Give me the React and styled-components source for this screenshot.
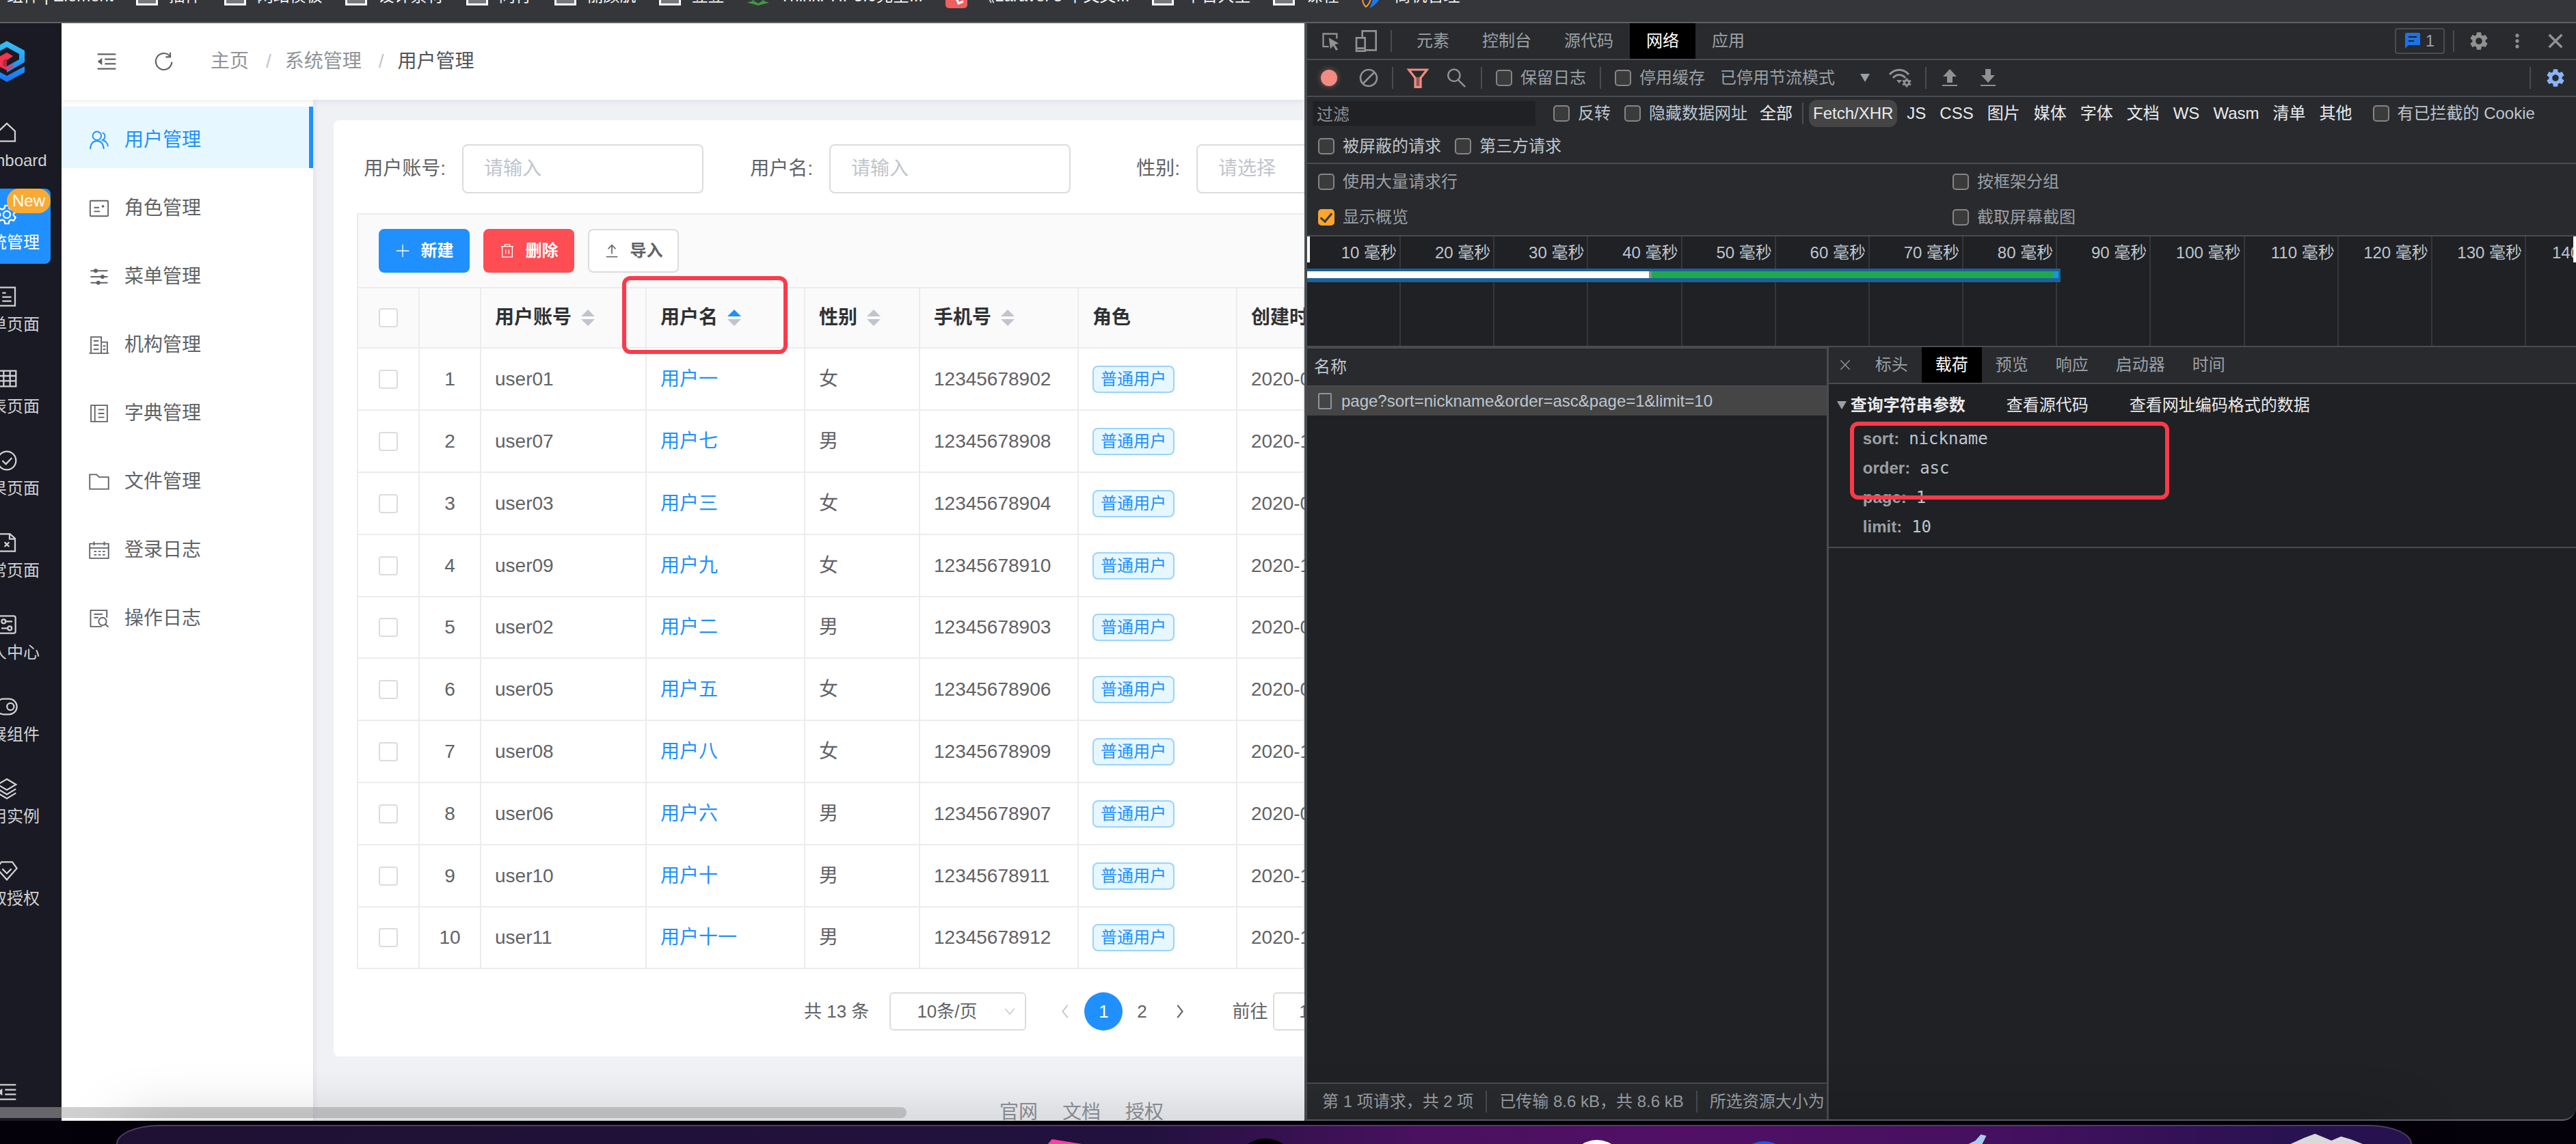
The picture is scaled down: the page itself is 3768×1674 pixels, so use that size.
import React from 'react';
import styled, { createGlobalStyle } from 'styled-components';
import { MdSettings, MdBlock, MdMoreVert } from 'react-icons/md';

const GlobalStyle = createGlobalStyle`
  * {
    box-sizing: border-box;
  }
  body {
    margin: 0;
    background: #04010a;
    font-family: "Liberation Sans", "Noto Sans CJK SC", sans-serif;
  }
  button, input, select {
    font: inherit;
    color: inherit;
    margin: 0;
  }
  button {
    border: 0;
    background: none;
    padding: 0;
    cursor: pointer;
  }
  a {
    color: inherit;
    text-decoration: none;
  }
`;

/* ---------- window ---------- */

const Screen = styled.div`
  position: relative;
  display: flex;
  flex-direction: column;
  height: 100vh;
  overflow: hidden;
`;
const Bookmarks = styled.nav`
  display: flex;
  flex: 0 0 34px;
  align-items: flex-end;
  gap: 33px;
  padding: 0 10px 24px;
  overflow: hidden;
  background: #35363a;
  border-bottom: 2px solid #5f6063;
  color: #f1f3f4;
  font-size: 24px;
  line-height: 28px;
  white-space: nowrap;
`;
const Bookmark = styled.a`
  display: flex;
  flex: none;
  align-items: flex-end;
  gap: 16px;
`;
const Windows = styled.div`
  display: flex;
  flex: 1;
  min-height: 0;
  margin-bottom: 34px;
`;
const AppPane = styled.div`
  position: relative;
  display: flex;
  flex: 955 1 0;
  min-width: 0;
  overflow: hidden;
  background: #eff1f5;
  color: #606266;
  font-size: 28px;
  line-height: 40px;
`;
const ScrollThumb = styled.div`
  position: absolute;
  left: 0;
  bottom: 4px;
  width: 1326px;
  height: 16px;
  border-radius: 0 8px 8px 0;
  background: rgba(168, 168, 168, 0.54);
`;

/* ---------- dark rail ---------- */

const Rail = styled.aside`
  display: flex;
  flex: 0 0 90px;
  justify-content: flex-end;
  overflow: hidden;
  background: #191a23;
  color: #d1d1d3;
`;
const RailInner = styled.div`
  display: flex;
  flex: 0 0 160px;
  flex-direction: column;
  align-items: center;
  padding-bottom: 26px;
`;
const LogoBox = styled.a`
  display: flex;
  align-items: center;
  height: 112px;
`;
const RailList = styled.nav`
  display: flex;
  flex: 1;
  flex-direction: column;
  gap: 10px;
  padding-top: 10px;
`;
const RailItem = styled.a`
  position: relative;
  display: flex;
  flex-direction: column;
  align-items: center;
  gap: 8px;
  width: 128px;
  height: 110px;
  padding-top: 22px;
  border-radius: 8px;
  background: ${({ $active }) => ($active ? '#2090ff' : 'none')};
  color: ${({ $active }) => ($active ? '#fff' : 'inherit')};
  font-size: 24px;
  line-height: 34px;
`;
const NewBadge = styled.span`
  position: absolute;
  top: 0;
  right: 0;
  padding: 0 8px;
  border-radius: 18px;
  background: #f8aa35;
  color: #fff;
  line-height: 36px;
`;

/* ---------- main column ---------- */

const Main = styled.div`
  display: flex;
  flex: 1;
  flex-direction: column;
  min-width: 0;
`;
const Header = styled.header`
  position: relative;
  z-index: 1;
  display: flex;
  flex: 0 0 112px;
  align-items: center;
  padding-left: 50px;
  background: #fff;
  box-shadow: 0 2px 8px rgba(0, 21, 41, 0.08);
`;
const HeaderButton = styled.button`
  display: flex;
  width: 84px;
`;
const Crumbs = styled.nav`
  display: flex;
  color: #909399;
`;
const Crumb = styled.a`
  color: ${({ $current }) => ($current ? '#515459' : '#909399')};
  &:not(:first-child)::before {
    content: "/";
    margin: 0 20px 0 25px;
    color: #c0c4cc;
  }
`;
const Body = styled.div`
  display: flex;
  flex: 1;
  min-height: 0;
`;
const SideMenu = styled.nav`
  display: flex;
  flex: 0 0 368px;
  flex-direction: column;
  gap: 10px;
  padding-top: 10px;
  background: #fff;
  box-shadow: 2px 0 8px rgba(0, 21, 41, 0.07);
`;
const SideItem = styled.a`
  display: flex;
  align-items: center;
  gap: 22px;
  height: 90px;
  padding: 8px 0 0 40px;
  border-right: 6px solid ${({ $active }) => ($active ? '#2090ff' : 'transparent')};
  background: ${({ $active }) => ($active ? '#e6f7ff' : 'none')};
  color: ${({ $active }) => ($active ? '#2090ff' : '#606266')};
`;
const Content = styled.main`
  flex: 1;
  min-width: 0;
  overflow: hidden;
  padding: 30px 0 0 30px;
`;
const Card = styled.section`
  padding: 35px 0 38px 34px;
  border-radius: 8px 0 0 8px;
  background: #fff;
`;
const SearchForm = styled.form`
  display: grid;
  grid-template-columns: repeat(3, 507px);
  gap: 30px;
  padding-bottom: 29px;
`;
const Field = styled.div`
  display: flex;
  align-items: center;
`;
const FieldLabel = styled.label`
  flex: 0 0 154px;
  padding-right: 24px;
  text-align: right;
  white-space: nowrap;
`;
const TextInput = styled.input`
  flex: 1;
  min-width: 0;
  height: 72px;
  padding: 0 30px;
  border: 2px solid #dcdcdc;
  border-radius: 8px;
  background: #fff;
  &::placeholder {
    color: #c0c4cc;
  }
`;
const SelectInput = styled.select`
  flex: 1;
  height: 72px;
  padding: 0 30px;
  appearance: none;
  border: 2px solid #dcdcdc;
  border-radius: 8px;
  background: #fff;
  color: #c0c4cc;
`;
const TableBox = styled.div`
  border: 2px solid #ececec;
  border-width: 2px 0 0 2px;
`;
const TableTools = styled.div`
  display: flex;
  gap: 20px;
  padding: 21px 30px;
  background: #fafafa;
  border-bottom: 2px solid #ececec;
`;
const ToolButton = styled.button`
  display: flex;
  align-items: center;
  justify-content: center;
  gap: 16px;
  width: 133px;
  height: 64px;
  border: 2px solid ${({ $color }) => $color || '#dcdcdc'};
  border-radius: 8px;
  background: ${({ $color }) => $color || '#fff'};
  color: ${({ $color }) => ($color ? '#fff' : '#606266')};
  font-size: 24px;
  font-weight: 700;
`;
const Table = styled.table`
  width: 100%;
  table-layout: fixed;
  border-spacing: 0;
`;
const Col = styled.col`
  width: ${({ $w }) => $w};
`;
const Th = styled.th`
  position: relative;
  height: 88px;
  padding: 0 20px;
  border: 2px solid #ececec;
  border-width: 0 2px 2px 0;
  background: #fafafa;
  color: #303133;
  text-align: left;
  white-space: nowrap;
`;
const Tr = styled.tr`
  height: 91px;
  &:nth-child(5n) {
    height: 90px;
  }
`;
const Td = styled.td`
  padding: 0 20px;
  border: 2px solid #ececec;
  border-width: 0 2px 2px 0;
  text-align: ${({ $center }) => ($center ? 'center' : 'left')};
  white-space: nowrap;
`;
const HeadCell = styled.div`
  display: flex;
  align-items: center;
  gap: 14px;
`;
const SortButton = styled.button`
  display: flex;
`;
const RowCheck = styled.input.attrs({ type: 'checkbox' })`
  display: block;
  width: 28px;
  height: 28px;
  margin: 0 auto;
  appearance: none;
  border: 2px solid #dcdcdc;
  border-radius: 4px;
  background: #fff;
`;
const NameLink = styled.a`
  color: #2090ff;
`;
const Tag = styled.span`
  display: block;
  width: 120px;
  height: 40px;
  border: 2px solid #9ad3fb;
  border-radius: 8px;
  background: #e6f7ff;
  color: #2090ff;
  font-size: 24px;
  line-height: 36px;
  text-align: center;
`;
const Mark = styled.div`
  position: absolute;
  z-index: 3;
  top: ${({ $top }) => $top};
  left: ${({ $left }) => $left};
  width: ${({ $width }) => $width};
  height: 114px;
  border: 6px solid #fc3a4a;
  border-radius: 12px;
  pointer-events: none;
`;
const Pager = styled.div`
  display: flex;
  align-items: center;
  margin: 34px 0 0 654px;
  font-size: 26px;
  white-space: nowrap;
`;
const PageSize = styled.div`
  position: relative;
  flex: none;
  margin: 0 29px 0 30px;
`;
const PageSizeSelect = styled.select`
  display: block;
  width: 200px;
  height: 56px;
  padding: 0 38px;
  appearance: none;
  border: 2px solid #dcdcdc;
  border-radius: 6px;
  background: #fff;
`;
const PageSizeArrow = styled.span`
  position: absolute;
  top: 20px;
  right: 16px;
  display: flex;
  color: #c0c4cc;
  pointer-events: none;
`;
const PageButton = styled.button`
  display: flex;
  flex: none;
  align-items: center;
  justify-content: center;
  width: 56px;
  height: 56px;
  border-radius: 50%;
  background: ${({ $active }) => ($active ? '#2090ff' : 'none')};
  color: ${({ $active }) => ($active ? '#fff' : '#606266')};
  &:disabled {
    color: #c0c4cc;
  }
`;
const JumpLabel = styled.label`
  display: flex;
  align-items: center;
  gap: 8px;
  margin-left: 48px;
`;
const JumpInput = styled.input`
  width: 90px;
  height: 56px;
  padding: 0;
  border: 2px solid #dcdcdc;
  border-radius: 6px;
  text-align: center;
`;
const Footer = styled.footer`
  display: flex;
  gap: 36px;
  margin: 62px 0 0 974px;
  color: #909399;
`;

/* ---------- devtools ---------- */

const DevTools = styled.div`
  display: flex;
  flex: 929 1 0;
  flex-direction: column;
  min-width: 0;
  overflow: hidden;
  border-left: 4px solid #494c50;
  border-bottom: 2px solid #5f6368;
  border-bottom-right-radius: 20px;
  background: #202124;
  color: #9aa0a6;
  font-size: 24px;
  line-height: 32px;
  white-space: nowrap;
`;
const DevBar = styled.div`
  display: flex;
  flex: 0 0 54px;
  align-items: center;
  padding: 0 14px 0 20px;
  border-bottom: 2px solid #494c50;
  background: #292a2d;
`;
const Spacer = styled.div`
  flex: 1;
`;
const Divider = styled.span`
  flex: none;
  width: 2px;
  height: 32px;
  margin: 0 ${({ $gap }) => $gap || '20px'};
  background: #494c50;
`;
const DevIcon = styled.button`
  display: flex;
  flex: none;
  align-items: center;
  align-self: center;
  justify-content: center;
  width: ${({ $w }) => $w || '32px'};
  height: 44px;
  margin-left: ${({ $ml }) => $ml || 0};
  color: ${({ $color }) => $color || '#919191'};
`;
const DevTab = styled.button`
  align-self: stretch;
  padding: 0 ${({ $pad }) => $pad || '24px'};
  background: ${({ $active }) => ($active ? '#000' : 'none')};
  color: ${({ $active }) => ($active ? '#fff' : '#9aa0a6')};
`;
const IssueButton = styled.button`
  display: flex;
  align-items: center;
  gap: 8px;
  height: 38px;
  padding: 0 13px;
  border: 2px solid #494c50;
  border-radius: 4px;
`;
const Record = styled.span`
  width: 24px;
  height: 24px;
  border-radius: 50%;
  background: #f28b82;
  box-shadow: 0 0 8px rgba(242, 139, 130, 0.5);
`;
const DevLabel = styled.label`
  display: flex;
  align-items: center;
  gap: 12px;
  margin-right: ${({ $mr }) => $mr || 0};
  color: ${({ $bright }) => ($bright ? '#bdc6cf' : '#9aa0a6')};
`;
const DevCheck = styled.input.attrs({ type: 'checkbox' })`
  flex: none;
  display: flex;
  justify-content: center;
  width: 24px;
  height: 24px;
  appearance: none;
  border: 2px solid #858585;
  border-radius: 5px;
  background: #3b3b3b;
  &:checked {
    border-color: #fda52d;
    background: #fda52d;
  }
  &:checked::after {
    content: "";
    width: 7px;
    height: 14px;
    border: solid #3b3b3b;
    border-width: 0 3px 3px 0;
    transform: rotate(40deg);
  }
`;
const Throttle = styled.select`
  width: 196px;
  padding: 0;
  appearance: none;
  border: 0;
  background: none;
  color: #9aa0a6;
`;
const Filters = styled.div`
  flex: none;
  border-bottom: 2px solid #494c50;
  background: #292a2d;
`;
const FilterLine = styled.div`
  display: flex;
  align-items: center;
  height: 48px;
  padding-left: ${({ $pl }) => $pl};
`;
const FilterInput = styled.input`
  width: 326px;
  height: 36px;
  margin-right: 26px;
  padding: 4px 6px 0;
  border: 0;
  background: #202124;
  &::placeholder {
    color: #8b9095;
  }
`;
const Types = styled.div`
  display: flex;
  align-items: center;
  gap: 8px;
  margin-right: 24px;
`;
const TypeButton = styled.button`
  height: 40px;
  padding: 0 6px;
  border-radius: 12px;
  background: ${({ $active }) => ($active ? '#454545' : 'none')};
  color: #e8eaed;
`;
const Options = styled.div`
  display: grid;
  flex: none;
  grid-template-columns: 1fr 1fr;
  grid-auto-rows: 52px;
  border-bottom: 2px solid #494c50;
  background: #292a2d;
  & > label {
    padding-left: 16px;
  }
`;
const Timeline = styled.div`
  position: relative;
  display: grid;
  flex: 0 0 160px;
  grid-template-columns: repeat(13, 7.39%) 1fr;
`;
const Tick = styled.div`
  overflow: hidden;
  padding: 8px 4px 0 0;
  border-right: 2px solid #35373a;
  color: #bdc6cf;
  text-align: right;
  &:last-of-type {
    padding-left: 38px;
    border: 0;
    text-align: left;
  }
`;
const TimeBar = styled.span`
  position: absolute;
  top: 47px;
  left: 0;
  display: flex;
  width: 59.4%;
  padding: 4px 3px 6px 0;
  background: #1a6299;
`;
const TimePart = styled.span`
  flex: ${({ $flex }) => $flex};
  height: 10px;
  background: ${({ $color }) => $color};
`;
const Handle = styled.span`
  position: absolute;
  top: 0;
  left: ${({ $end }) => ($end ? 'auto' : 0)};
  right: ${({ $end }) => ($end ? 0 : 'auto')};
  width: 4px;
  height: 38px;
  background: #fff;
`;
const Split = styled.div`
  display: flex;
  flex: 1;
  min-height: 0;
  border-top: 2px solid #494c50;
`;
const Requests = styled.div`
  display: flex;
  flex: 0 0 41.1%;
  flex-direction: column;
  min-width: 0;
  border-right: 3px solid #494c50;
`;
const NameHead = styled.div`
  padding: 11px 10px;
  border: 2px solid #494c50;
  border-width: 2px 0;
  background: #292a2d;
  color: #bdc6cf;
`;
const RequestRow = styled.a`
  display: flex;
  align-items: center;
  gap: 14px;
  height: 42px;
  padding-left: 16px;
  background: #454545;
  color: #bdc6cf;
`;
const Status = styled.div`
  display: flex;
  align-items: center;
  height: 54px;
  margin-top: auto;
  padding-left: 22px;
  overflow: hidden;
  border-top: 2px solid #494c50;
  background: #292a2d;
`;
const Detail = styled.div`
  flex: 1;
  min-width: 0;
`;
const DetailTabs = styled.div`
  display: flex;
  height: 54px;
  border-bottom: 2px solid #494c50;
  background: #292a2d;
`;
const Payload = styled.div`
  position: relative;
  padding: 15px 12px 8px;
  border-bottom: 2px solid #494c50;
`;
const PayloadHead = styled.div`
  display: flex;
  align-items: center;
  gap: 60px;
  margin-bottom: 11px;
  color: #e8eaed;
`;
const PayloadTitle = styled.button`
  display: flex;
  align-items: center;
  gap: 6px;
  font-weight: 700;
`;
const Params = styled.dl`
  margin: 0 0 0 38px;
`;
const Param = styled.div`
  display: flex;
  align-items: center;
  gap: 14px;
  height: 43px;
`;
const ParamKey = styled.dt`
  font-weight: 700;
`;
const ParamValue = styled.dd`
  margin: 0;
  color: #bdc6cf;
  font-family: "DejaVu Sans Mono", monospace;
`;

/* ---------- dock ---------- */

const Dock = styled.div`
  position: absolute;
  left: 170px;
  right: 240px;
  bottom: 0;
  height: 28px;
  border: 2px solid #4d3f63;
  border-bottom: 0;
  border-radius: 90px 90px 0 0 / 40px 40px 0 0;
  background: linear-gradient(90deg, #1f1133 0%, #22113f 45%, #4a1160 57%, #511064 68%, #451060 82%, #281250 95%, #26124e 100%);
  box-shadow: 0 0 80px rgba(0, 0, 0, 0.35);
`;
const DockArt = styled.svg`
  display: block;
  width: 100%;
  height: 26px;
`;

/* ---------- icons ---------- */

const Svg = styled.svg`
  display: block;
  flex: none;
  width: ${({ $size }) => $size || 32}px;
  height: ${({ $size }) => $size || 32}px;
  fill: none;
  stroke: currentColor;
  stroke-width: ${({ $sw }) => $sw || 1.4};
`;

const Icon = ({ name, size, sw }) => (
  <Svg viewBox="0 0 24 24" $size={size} $sw={sw} aria-hidden="true">
    {icons[name]}
  </Svg>
);

const icons = {
  fold: <><path d="M2 4h20M10 9.500h12M10 14.500h12M2 20h20" /><path d="M2 12l5-4v8z" fill="currentColor" stroke="none" /></>,
  refresh: <path d="M20.500 12.500A8.800 9 0 1 1 18 5.700M18.800 2v5h-5" />,
  home: <path d="M3 21.500V10.500L12 2l9 8.500v11z" />,
  setting: <><path d="M10 2.200h4l.7 3 2 1.100 2.900-.9 2 3.500-2.200 2.100v2l2.200 2.100-2 3.500-2.900-.9-2 1.100-.7 3h-4l-.7-3-2-1.100-2.900.9-2-3.500L4.600 13v-2L2.400 8.900l2-3.500 2.900.9 2-1.100z" /><circle cx="12" cy="12" r="3.800" /></>,
  form: <path d="M3 2h18v20H3zM7 8h4M7 12.500h10M7 17h10" />,
  grid: <path d="M2 3.500h20v17H2zM2 9h20M2 14.500h20M8.500 3.500v17M15.500 3.500v17" />,
  success: <><circle cx="12" cy="12" r="10" /><path d="M7 12l4 3.800L17.500 9" /></>,
  error: <path d="M3 2.500h12.500L21 7.500v14H3zM15 2.500V8h6M9.500 11.500l5 5M14.500 11.500l-5 5" />,
  control: <><rect x="2.500" y="2.500" width="19" height="19" rx="2" /><circle cx="8.500" cy="8.500" r="2.200" /><path d="M10.700 8.500H18M6 16h7" /><circle cx="15.200" cy="16" r="2.200" /></>,
  toggle: <><rect x="0" y="3.500" width="23" height="17" rx="8.500" /><circle cx="16" cy="12" r="3.800" /></>,
  layers: <path d="M12 1.500l10 6-10 6-10-6zM2 12.300l10 6 10-6M2 16.800l10 6 10-6" />,
  diamond: <path d="M6 2.500h12l5 7L12 22 1 9.500zM7 10l5 5 5-5" />,
  users: <><circle cx="9.500" cy="7" r="5" /><path d="M1.500 22.500c.5-6 3.500-9.500 8-9.500s7.500 3.500 8 9.500M15.500 3.500c4 .5 4.500 6.500.5 8.500 4 1 6 4 6.500 7.500" /></>,
  role: <><rect x="1.500" y="3" width="21" height="18" rx="1" /><path d="M6 11h6M6 15.500h7M15 9.500h3M16.500 8v3" /></>,
  sliders: <><path d="M2 5h20M2 12h20M2 19h20" /><circle cx="8" cy="5" r="1.600" fill="currentColor" /><circle cx="16" cy="12" r="1.600" fill="currentColor" /><circle cx="11" cy="19" r="1.600" fill="currentColor" /></>,
  office: <path d="M0.500 21.500h23M2.500 21.500v-19h12v19M14.500 8.500h7v13M5.500 7h6M5.500 12h6M5.500 17h6M16.500 13h3M16.500 17h3" />,
  dict: <path d="M2.500 2.500h19v19h-19zM7 2.500v19M11 7.500h7M11 12h7M11 16.500h7" />,
  folder: <path d="M1 3.500h8l3 3h11v14H1z" />,
  calendar: <path d="M1 4.500h22v17H1zM1 9.500h22M6 2v4.500M18 2v4.500M6 13.500h3M11 13.500h3M16 13.500h3M6 17.500h3M11 17.500h3M16 17.500h3" />,
  log: <><path d="M21 11V2.500H2v19h13M6 7h10M6 11h5" /><circle cx="16" cy="15.500" r="4.500" /><path d="M19.300 18.800l3.500 3.200" /></>,
  plus: <path d="M12 2v20M2 12h20" />,
  trash: <path d="M2 5h20M8 5V2h8v3M4 5v17h16V5M9.500 10v7M14.500 10v7" />,
  upload: <path d="M12 17V3M6 9l6-6 6 6M3 21.500h18" />,
  left: <path d="M16 2L8 12l8 10" />,
  right: <path d="M8 2l8 10-8 10" />,
  down: <path d="M2 6l10 12L22 6" />,
  inspect: <><path d="M10 19H3V3h17v6" /><path d="M10 8l12.500 7-5 1.500 4 6-2.500 1.500-3.500-6-3.500 4z" fill="currentColor" stroke="none" /></>,
  device: <path d="M8 8V1h15v21H11M1.500 8.500H11V23H1.500zM1.500 20H11" />,
  filter: <><path d="M2 3h20l-7 9v10H9V12z" /><path d="M8 11h8v11H9z" fill="currentColor" fillOpacity=".5" stroke="none" /></>,
  search: <><circle cx="9.500" cy="9" r="7" /><path d="M14.500 14.500l8 8" /></>,
  close: <path d="M4 4l16 16M20 4L4 20" />,
};

const FolderIcon = () => (
  <svg width="32" height="28" viewBox="0 0 32 28" aria-hidden="true">
    <path d="M1.500 2h11l4 4h14v20.500h-29z" fill="#77787b" stroke="#fff" strokeWidth="3" />
  </svg>
);
const TreeIcon = () => (
  <svg width="32" height="28" viewBox="0 0 32 28" aria-hidden="true">
    <path d="M16 2l9 8-9 4-9-4zM3 16l6-3 7 5 7-5 6 3-5 5-8-2-8 2zM0 24l9-3 7 4 7-4 9 3-9 2-7 2-7-2z" fill="#3f9b3f" />
  </svg>
);
const LowGlyph = styled.svg`
  margin-bottom: -4px;
`;
const LaravelIcon = () => (
  <LowGlyph width="32" height="42" viewBox="0 0 32 42" aria-hidden="true">
    <rect width="32" height="42" rx="5" fill="#ee5f5f" />
    <path d="M5 22l12 8 8-7M17 30l2 5 7-3" fill="none" stroke="#fff" strokeWidth="3" />
  </LowGlyph>
);
const FlameIcon = () => (
  <LowGlyph width="32" height="36" viewBox="0 0 32 36" aria-hidden="true">
    <path d="M12 4C0 14 0 28 7 34c8-6 10-20 5-30z" fill="none" stroke="#f09a3e" strokeWidth="2" />
    <path d="M30 2c2 18-6 28-18 34 6-10 6-20 6-34z" fill="#1e78f0" />
  </LowGlyph>
);

const Logo = () => (
  <svg width="52" height="60" viewBox="0 0 52 60" aria-label="logo">
    <defs>
      <linearGradient id="ring" x1="0" y1="0" x2="0" y2="1">
        <stop offset="0" stopColor="#35c2f5" />
        <stop offset="1" stopColor="#1673f5" />
      </linearGradient>
    </defs>
    <path d="M26 0l26 14v17L26 46v-9l18-10v-8L26 9 8 19v22l18 10 26-14v9L26 60 0 45V14z" fill="url(#ring)" />
    <path d="M26 17l9 5-9 6v-3l-6 4v7l6 3 9-5v4l-9 5-13-7V24z" fill="#f5334f" />
    <path d="M26 17l9 5-9 6v13l-13-7V24z" fill="#f5334f" fillOpacity=".7" />
  </svg>
);

const SortIcon = ({ asc }) => (
  <svg width="20" height="24" viewBox="0 0 20 24" aria-hidden="true">
    <path d="M10 0l10 10H0z" fill={asc ? '#2090ff' : '#c0c4cc'} />
    <path d="M0 14h20L10 24z" fill="#c0c4cc" />
  </svg>
);
const IssueIcon = () => (
  <svg width="22" height="24" viewBox="0 0 22 24" aria-hidden="true">
    <path d="M2 0h18a2 2 0 0 1 2 2v16H5l-5 5V2a2 2 0 0 1 2-2z" fill="#1a73e8" />
    <path d="M5 6h12M5 12h8" stroke="#202124" strokeWidth="2" />
  </svg>
);
const WifiIcon = () => (
  <svg width="34" height="28" viewBox="0 0 34 28" fill="none" stroke="#919191" strokeWidth="3" aria-hidden="true">
    <path d="M1 9c8-9 20-9 28 0M6 14c5-6 13-6 18 0" />
    <path d="M11 17h8l-4 5z" fill="#919191" stroke="none" />
    <circle cx="26" cy="21" r="3.500" />
    <path d="M26 14.500v2M26 25.500v2M20 18l2 1M30 23l2 1M20 24l2-1M30 19l2-1" />
  </svg>
);
const Transfer = ({ down }) => (
  <svg width="22" height="26" viewBox="0 0 22 26" fill="#919191" aria-hidden="true">
    <path d={down ? 'M7 0h8v9h6L11 20 1 9h6z' : 'M7 20h8v-9h6L11 0 1 11h6z'} />
    <path d="M0 23h22v2H0z" />
  </svg>
);
const Triangle = ({ size = 14 }) => (
  <svg width={size} height="12" viewBox="0 0 14 12" fill="#9aa0a6" aria-hidden="true">
    <path d="M0 0h14L7 12z" />
  </svg>
);

/* ---------- data ---------- */

const bookmarks = [
  [null, '组件 | Element'],
  [FolderIcon, '插件'],
  [FolderIcon, '网站模板'],
  [FolderIcon, '设计素材'],
  [FolderIcon, '同行'],
  [FolderIcon, '丽颜肌'],
  [FolderIcon, '豆豆'],
  [TreeIcon, 'ThinkPHP5.0完全...'],
  [LaravelIcon, '《Laravel 8 中文文...'],
  [FolderIcon, '平台大全'],
  [FolderIcon, '课程'],
  [FlameIcon, '商机管理'],
];

const railItems = [
  ['home', 'Dashboard'],
  ['setting', '系统管理'],
  ['form', '表单页面'],
  ['grid', '列表页面'],
  ['success', '结果页面'],
  ['error', '异常页面'],
  ['control', '个人中心'],
  ['toggle', '扩展组件'],
  ['layers', '应用实例'],
  ['diamond', '获取授权'],
];

const sideItems = [
  ['users', '用户管理'],
  ['role', '角色管理'],
  ['sliders', '菜单管理'],
  ['office', '机构管理'],
  ['dict', '字典管理'],
  ['folder', '文件管理'],
  ['calendar', '登录日志'],
  ['log', '操作日志'],
];

const users = [
  ['user01', '用户一', '女', '12345678902', '2020-0'],
  ['user07', '用户七', '男', '12345678908', '2020-1'],
  ['user03', '用户三', '女', '12345678904', '2020-0'],
  ['user09', '用户九', '女', '12345678910', '2020-1'],
  ['user02', '用户二', '男', '12345678903', '2020-0'],
  ['user05', '用户五', '女', '12345678906', '2020-0'],
  ['user08', '用户八', '女', '12345678909', '2020-1'],
  ['user06', '用户六', '男', '12345678907', '2020-0'],
  ['user10', '用户十', '男', '12345678911', '2020-1'],
  ['user11', '用户十一', '男', '12345678912', '2020-1'],
];

const columns = ['90px', '90px', '242px', '232px', '168px', '232px', '232px', 'auto'];
const devTabs = ['元素', '控制台', '源代码', '网络', '应用'];
const types = ['Fetch/XHR', 'JS', 'CSS', '图片', '媒体', '字体', '文档', 'WS', 'Wasm', '清单', '其他'];
const detailTabs = ['标头', '载荷', '预览', '响应', '启动器', '时间'];
const params = [['sort', 'nickname'], ['order', 'asc'], ['page', '1'], ['limit', '10']];

/* ---------- parts ---------- */

const SortHead = ({ children, asc }) => (
  <HeadCell>
    {children}
    <SortButton type="button" aria-label="排序"><SortIcon asc={asc} /></SortButton>
  </HeadCell>
);

const Check = ({ children, checked, ...rest }) => (
  <DevLabel {...rest}>
    <DevCheck defaultChecked={checked} />
    {children}
  </DevLabel>
);

const UserTable = () => (
  <TableBox>
    <TableTools>
      <ToolButton type="button" $color="#2090ff"><Icon name="plus" size={22} />新建</ToolButton>
      <ToolButton type="button" $color="#ff4d54"><Icon name="trash" size={22} />删除</ToolButton>
      <ToolButton type="button"><Icon name="upload" size={22} sw={1.8} />导入</ToolButton>
    </TableTools>
    <Table>
      <colgroup>
        {columns.map((w, i) => <Col key={i} $w={w} />)}
      </colgroup>
      <thead>
        <tr>
          <Th><RowCheck aria-label="全选" /></Th>
          <Th />
          <Th><SortHead>用户账号</SortHead></Th>
          <Th>
            <SortHead asc>用户名</SortHead>
            <Mark $top="-18px" $left="-36px" $width="242px" />
          </Th>
          <Th><SortHead>性别</SortHead></Th>
          <Th><SortHead>手机号</SortHead></Th>
          <Th>角色</Th>
          <Th>创建时间</Th>
        </tr>
      </thead>
      <tbody>
        {users.map(([account, name, sex, phone, created], i) => (
          <Tr key={account}>
            <Td><RowCheck aria-label={account} /></Td>
            <Td $center>{i + 1}</Td>
            <Td>{account}</Td>
            <Td><NameLink href="#">{name}</NameLink></Td>
            <Td>{sex}</Td>
            <Td>{phone}</Td>
            <Td><Tag>普通用户</Tag></Td>
            <Td>{created}</Td>
          </Tr>
        ))}
      </tbody>
    </Table>
  </TableBox>
);

const Admin = () => (
  <AppPane>
    <Rail>
      <RailInner>
        <LogoBox href="#"><Logo /></LogoBox>
        <RailList>
          {railItems.map(([icon, text]) => (
            <RailItem key={text} href="#" $active={text === '系统管理'}>
              <Icon name={icon} sw={1.7} />
              {text}
              {text === '系统管理' && <NewBadge>New</NewBadge>}
            </RailItem>
          ))}
        </RailList>
        <Icon name="fold" sw={1.8} />
      </RailInner>
    </Rail>
    <Main>
      <Header>
        <HeaderButton type="button" aria-label="折叠"><Icon name="fold" sw={1.6} /></HeaderButton>
        <HeaderButton type="button" aria-label="刷新"><Icon name="refresh" sw={1.6} /></HeaderButton>
        <Crumbs>
          <Crumb href="#">主页</Crumb>
          <Crumb href="#">系统管理</Crumb>
          <Crumb href="#" $current>用户管理</Crumb>
        </Crumbs>
      </Header>
      <Body>
        <SideMenu>
          {sideItems.map(([icon, text], i) => (
            <SideItem key={text} href="#" $active={i === 0}>
              <Icon name={icon} size={30} sw={1.5} />
              {text}
            </SideItem>
          ))}
        </SideMenu>
        <Content>
          <Card>
            <SearchForm>
              <Field>
                <FieldLabel htmlFor="account">用户账号:</FieldLabel>
                <TextInput id="account" placeholder="请输入" />
              </Field>
              <Field>
                <FieldLabel htmlFor="nickname">用户名:</FieldLabel>
                <TextInput id="nickname" placeholder="请输入" />
              </Field>
              <Field>
                <FieldLabel htmlFor="sex">性别:</FieldLabel>
                <SelectInput id="sex"><option>请选择</option></SelectInput>
              </Field>
            </SearchForm>
            <UserTable />
            <Pager>
              共 13 条
              <PageSize>
                <PageSizeSelect aria-label="每页条数"><option>10条/页</option></PageSizeSelect>
                <PageSizeArrow><Icon name="down" size={16} sw={2} /></PageSizeArrow>
              </PageSize>
              <PageButton type="button" aria-label="上一页" disabled><Icon name="left" size={22} sw={2} /></PageButton>
              <PageButton type="button" $active>1</PageButton>
              <PageButton type="button">2</PageButton>
              <PageButton type="button" aria-label="下一页"><Icon name="right" size={22} sw={2.2} /></PageButton>
              <JumpLabel>
                前往
                <JumpInput defaultValue="1" />
              </JumpLabel>
            </Pager>
          </Card>
          <Footer>
            <a href="#">官网</a>
            <a href="#">文档</a>
            <a href="#">授权</a>
          </Footer>
        </Content>
      </Body>
    </Main>
    <ScrollThumb />
  </AppPane>
);

const Inspector = () => (
  <DevTools>
    <DevBar>
      <DevIcon type="button" aria-label="选择元素" $w="28px"><Icon name="inspect" size={28} sw={2} /></DevIcon>
      <DevIcon type="button" aria-label="设备" $ml="22px"><Icon name="device" size={32} sw={2} /></DevIcon>
      <Divider $gap="12px 0 20px" />
      {devTabs.map((t) => <DevTab key={t} type="button" $active={t === '网络'}>{t}</DevTab>)}
      <Spacer />
      <IssueButton type="button"><IssueIcon />1</IssueButton>
      <Divider $gap="20px 0 12px" />
      <DevIcon type="button" aria-label="设置"><MdSettings size={34} /></DevIcon>
      <DevIcon type="button" aria-label="更多" $ml="24px"><MdMoreVert size={40} /></DevIcon>
      <DevIcon type="button" aria-label="关闭" $ml="24px"><Icon name="close" size={28} sw={3} /></DevIcon>
    </DevBar>
    <DevBar>
      <DevIcon type="button" aria-label="录制" $w="24px"><Record /></DevIcon>
      <DevIcon type="button" aria-label="清除" $ml="30px"><MdBlock size={32} /></DevIcon>
      <Divider $gap="20px 0 18px" />
      <DevIcon type="button" aria-label="过滤" $color="#f28b82"><Icon name="filter" size={32} sw={2.4} /></DevIcon>
      <DevIcon type="button" aria-label="搜索" $ml="24px"><Icon name="search" size={30} sw={2} /></DevIcon>
      <Divider />
      <Check>保留日志</Check>
      <Divider />
      <Check $mr="22px">停用缓存</Check>
      <Throttle aria-label="节流"><option>已停用节流模式</option></Throttle>
      <DevIcon type="button" aria-label="展开"><Triangle /></DevIcon>
      <DevIcon type="button" aria-label="网络状况" $w="36px" $ml="18px"><WifiIcon /></DevIcon>
      <Divider $gap="18px" />
      <DevIcon type="button" aria-label="导入"><Transfer /></DevIcon>
      <DevIcon type="button" aria-label="导出" $ml="24px"><Transfer down /></DevIcon>
      <Spacer />
      <Divider />
      <DevIcon type="button" aria-label="网络设置" $color="#8ab4f8"><MdSettings size={34} /></DevIcon>
    </DevBar>
    <Filters>
      <FilterLine $pl="8px">
        <FilterInput placeholder="过滤" aria-label="过滤" />
        <Check $bright $mr="20px">反转</Check>
        <Check $bright $mr="12px">隐藏数据网址</Check>
        <Types>
          <TypeButton type="button">全部</TypeButton>
          <Divider $gap="0px" />
          {types.map((t, i) => <TypeButton key={t} type="button" $active={i === 0}>{t}</TypeButton>)}
        </Types>
        <Check $bright>有已拦截的 Cookie</Check>
      </FilterLine>
      <FilterLine $pl="16px">
        <Check $bright $mr="20px">被屏蔽的请求</Check>
        <Check $bright>第三方请求</Check>
      </FilterLine>
    </Filters>
    <Options>
      <Check>使用大量请求行</Check>
      <Check>按框架分组</Check>
      <Check checked>显示概览</Check>
      <Check>截取屏幕截图</Check>
    </Options>
    <Timeline>
      {Array.from({ length: 14 }, (_, i) => <Tick key={i}>{(i + 1) * 10} 毫秒</Tick>)}
      <TimeBar>
        <TimePart $flex="500" $color="#fff" />
        <TimePart $flex="4" $color="#8a8f8c" />
        <TimePart $flex="588" $color="#1fa94c" />
        <TimePart $flex="8" $color="#1a94dc" />
      </TimeBar>
      <Handle />
      <Handle $end />
    </Timeline>
    <Split>
      <Requests>
        <NameHead>名称</NameHead>
        <RequestRow href="#">
          <svg width="20" height="24" viewBox="0 0 20 24" aria-hidden="true">
            <rect x="1" y="1" width="18" height="22" rx="1" fill="none" stroke="#8d949c" strokeWidth="2" />
          </svg>
          page?sort=nickname&amp;order=asc&amp;page=1&amp;limit=10
        </RequestRow>
        <Status>
          第 1 项请求，共 2 项
          <Divider $gap="18px" />
          已传输 8.6 kB，共 8.6 kB
          <Divider $gap="18px" />
          所选资源大小为
        </Status>
      </Requests>
      <Detail>
        <DetailTabs>
          <DevIcon type="button" aria-label="关闭" $w="48px"><Icon name="close" size={20} sw={1.8} /></DevIcon>
          {detailTabs.map((t) => (
            <DevTab key={t} type="button" $pad="20px" $active={t === '载荷'}>{t}</DevTab>
          ))}
        </DetailTabs>
        <Payload>
          <PayloadHead>
            <PayloadTitle type="button"><Triangle />查询字符串参数</PayloadTitle>
            <button type="button">查看源代码</button>
            <button type="button">查看网址编码格式的数据</button>
          </PayloadHead>
          <Params>
            {params.map(([key, value]) => (
              <Param key={key}>
                <ParamKey>{key}:</ParamKey>
                <ParamValue>{value}</ParamValue>
              </Param>
            ))}
          </Params>
          <Mark $top="55px" $left="31px" $width="467px" />
        </Payload>
      </Detail>
    </Split>
  </DevTools>
);

export default function App() {
  return (
    <>
      <GlobalStyle />
      <Screen>
        <Bookmarks>
          {bookmarks.map(([Glyph, text]) => (
            <Bookmark key={text} href="#">{Glyph && <Glyph />}{text}</Bookmark>
          ))}
        </Bookmarks>
        <Windows>
          <Admin />
          <Inspector />
        </Windows>
        <Dock>
          <DockArt viewBox="166 1648 3362 26" preserveAspectRatio="none">
            <path d="M1530 1674l6-7 44 7z" fill="#ff3fa4" />
            <circle cx="1849" cy="1712" r="46" fill="#000" />
            <circle cx="2335" cy="1708" r="40" fill="#fff" />
            <circle cx="2580" cy="1710" r="40" fill="#1260f0" />
            <path d="M2880 1674l10-5 8-9 8 2-6 12z" fill="#a8cdea" />
            <path d="M3352 1674l20-9 16-6 24 10 14-6 14 4 18 7z" fill="#d9d9d9" />
          </DockArt>
        </Dock>
      </Screen>
    </>
  );
}
